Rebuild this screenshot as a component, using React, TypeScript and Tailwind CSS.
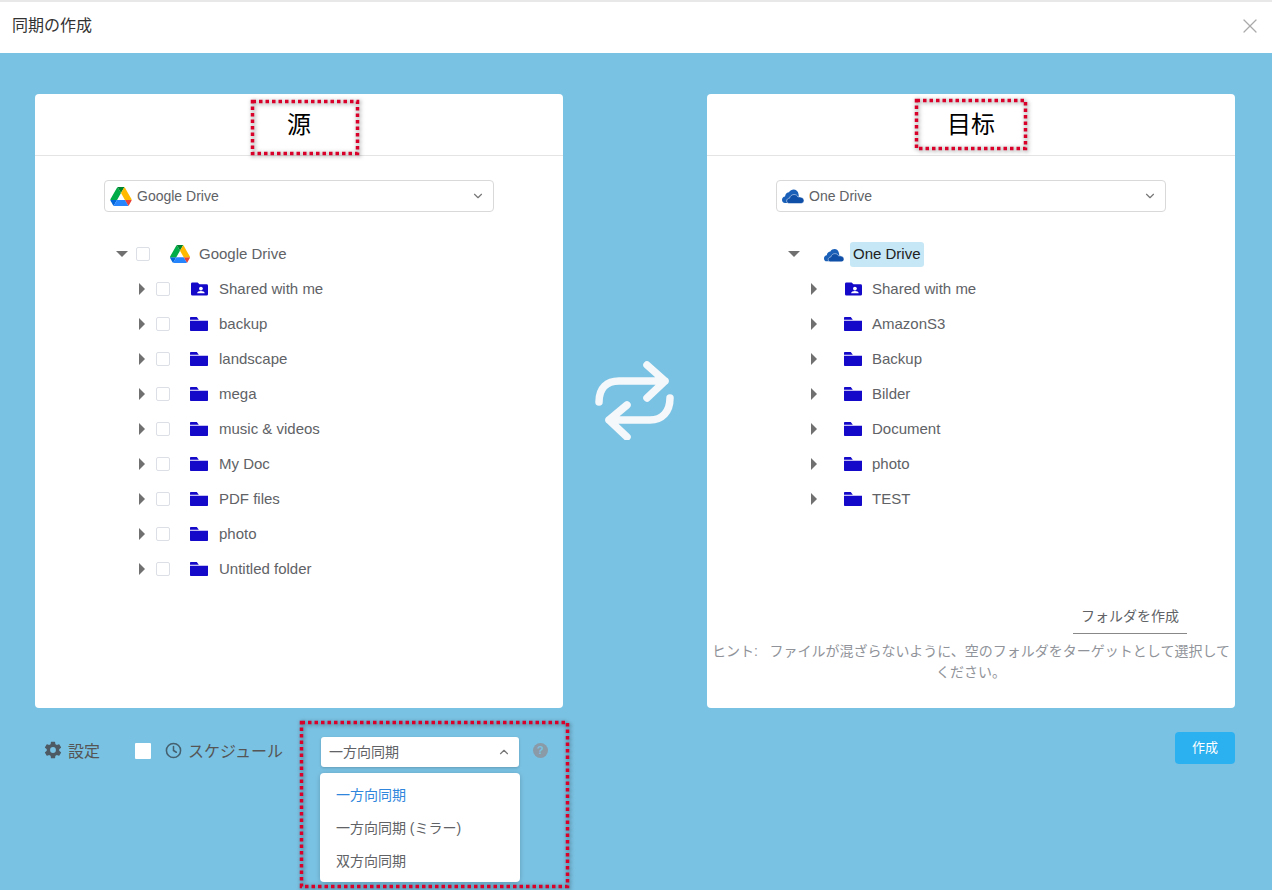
import React from 'react';
import { ChevronDown, ChevronUp, X } from 'lucide-react';

const FONT = "font-['Liberation_Sans','Noto_Sans_CJK_JP',sans-serif]";

const DriveLogo = ({ className }: { className: string }) => (
  <svg viewBox="0 0 87.3 78" className={className}>
    <path d="m6.6 66.85 3.85 6.65c.8 1.4 1.95 2.5 3.3 3.3l13.75-23.8h-27.5c0 1.55.4 3.1 1.2 4.5z" fill="#0066da" />
    <path d="m43.65 25-13.75-23.8c-1.35.8-2.5 1.9-3.3 3.3l-25.4 44a9.06 9.06 0 0 0 -1.2 4.5h27.5z" fill="#00ac47" />
    <path d="m73.55 76.8c1.35-.8 2.5-1.9 3.3-3.3l1.6-2.75 7.65-13.25c.8-1.4 1.2-2.95 1.2-4.5h-27.502l5.852 11.5z" fill="#ea4335" />
    <path d="m43.65 25 13.75-23.8c-1.35-.8-2.9-1.2-4.5-1.2h-18.5c-1.6 0-3.15.45-4.5 1.2z" fill="#00832d" />
    <path d="m59.8 53h-32.3l-13.75 23.8c1.35.8 2.9 1.2 4.5 1.2h50.8c1.6 0 3.15-.45 4.5-1.2z" fill="#2684fc" />
    <path d="m73.4 26.5-12.7-22c-.8-1.4-1.95-2.5-3.3-3.3l-13.75 23.8 16.15 28h27.45c0-1.55-.4-3.1-1.2-4.5z" fill="#ffba00" />
  </svg>
);

const OneDriveLogo = ({ className }: { className: string }) => (
  <svg viewBox="0 0 22 15" className={className}>
    <path d="M6 14.500H3C1 14.500 0 13 0 11.300 0 9.300 1.500 8 3 7.900 3.500 5 5.300 3.700 7 3.700 8 1.800 10 1 11.500 1 14 1 16 2.700 16.500 5.500L17 9 8 12z" fill="#1a5fb8" />
    <path d="M7 15C5.500 15 4.600 13.700 4.600 12.500 4.600 10.800 6 9.700 7.500 9.700 8 7.400 10 6 12 6 14 6 15.500 7 16 8.500 18 8 22 9 22 12 22 14 20.500 15 19 15z" fill="#0f4fa8" stroke="#fff" strokeWidth="0.5" />
  </svg>
);

const FolderIcon = ({ shared }: { shared?: boolean }) =>
  shared ? (
    <svg viewBox="0 0 18 14" className="mb-[2px] ml-[1px] h-[14px] w-[17px] shrink-0">
      <path d="M1.500 0H7l2 2h7.500A1.500 1.500 0 0 1 18 3.500v9a1.500 1.500 0 0 1-1.500 1.500h-15A1.500 1.500 0 0 1 0 12.500v-11A1.500 1.500 0 0 1 1.500 0z" fill="#1509c9" />
      <circle cx="10.500" cy="6.500" r="2" fill="#fff" />
      <path d="M6.500 11.500C6.500 9.800 8.500 9 10.500 9s4 .8 4 2.500z" fill="#fff" />
    </svg>
  ) : (
    <svg viewBox="0 0 18 14" className="mb-[2px] h-[14px] w-[18px] shrink-0">
      <path d="M.8 0h6l2 2.800H0V.8A.8.8 0 0 1 .8 0z" fill="#1509c9" />
      <path d="M0 3.800h18V13.200a.8.8 0 0 1-.8.8H.8a.8.8 0 0 1-.8-.8z" fill="#1509c9" />
    </svg>
  );

const Caret = ({ open }: { open?: boolean }) =>
  open ? (
    <span className="h-0 w-0 border-x-[6px] border-t-[6px] border-x-transparent border-t-[#707070]" />
  ) : (
    <span className="h-0 w-0 border-y-[6px] border-l-[6px] border-y-transparent border-l-[#707070]" />
  );

const Check = () => <span className="h-[14px] w-[14px] shrink-0 rounded-[2px] border border-[#dcdfe6] bg-white" />;

const SelectBox = ({ label, icon }: { label: string; icon: React.ReactNode }) => (
  <div className="mx-auto mt-[24px] flex h-[32px] w-[390px] items-center rounded-[4px] border border-[#d9d9d9] pl-[5px] pr-[8px] text-[14px] text-[#606266]">
    {icon}
    <span className="ml-[5px]">{label}</span>
    <ChevronDown className="ml-auto h-[14px] w-[14px] text-[#777]" />
  </div>
);

const Row = ({ name, check }: { name: string; check: boolean }) => (
  <div className="ml-[101px] flex h-[35px] items-center text-[15px] text-[#606266]">
    <span className="mb-[2px] flex w-[12px] justify-center"><Caret /></span>
    {check ? <span className="mb-[2px] ml-[8px] mr-[20px] flex"><Check /></span> : <span className="w-[24px]" />}
    <FolderIcon shared={name === 'Shared with me'} />
    <span className={check ? 'ml-[11px]' : 'ml-[10px]'}>{name}</span>
  </div>
);

// red dotted annotation boxes painted over the screenshot
const Dotted = ({ className, w, h }: { className: string; w: number; h: number }) => (
  <svg width={w} height={h} className={`absolute overflow-visible drop-shadow-[1px_1px_2px_rgba(0,0,0,0.5)] ${className}`}>
    <rect x="1.500" y="1.500" width={w - 3} height={h - 3} fill="none" stroke="#d9002a" strokeWidth="3.500" strokeDasharray="3.500 3" />
  </svg>
);

const sourceFolders = ['Shared with me', 'backup', 'landscape', 'mega', 'music & videos', 'My Doc', 'PDF files', 'photo', 'Untitled folder'];
const targetFolders = ['Shared with me', 'AmazonS3', 'Backup', 'Bilder', 'Document', 'photo', 'TEST'];

export default function App() {
  return (
    <div className={`relative flex h-[890px] w-[1272px] flex-col overflow-hidden bg-[#7ac2e3] ${FONT}`}>
      <header className="flex h-[53px] items-center justify-between border-t-2 border-[#e8e8e8] bg-white pb-[3px] pl-[12px] pr-[10px]">
        <span className="text-[16px] text-[#333]">同期の作成</span>
        <X className="h-[24px] w-[24px] text-[#aaa]" strokeWidth={1.2} />
      </header>

      <main className="flex items-start justify-between pl-[35px] pr-[37px] pt-[41px]">
        <section className="flex h-[614px] w-[528px] flex-col rounded-[4px] bg-white">
          <h2 className="flex h-[62px] items-center justify-center border-b border-[#e4e4e4] text-[24px] text-black">源</h2>
          <SelectBox label="Google Drive" icon={<DriveLogo className="h-[19px] w-[22px]" />} />
          <div className="mt-[25px]">
            <div className="flex h-[35px] items-center text-[15px] text-[#606266]">
              <span className="mb-[2px] ml-[81px] flex w-[12px] justify-center"><Caret open /></span>
              <span className="mb-[1px] ml-[8px] flex"><Check /></span>
              <DriveLogo className="mb-[1px] ml-[20px] h-[18px] w-[20px]" />
              <span className="ml-[9px]">Google Drive</span>
            </div>
            {sourceFolders.map((f) => (
              <Row key={f} name={f} check />
            ))}
          </div>
        </section>

        <svg viewBox="0 0 80 80" className="mt-[266px] h-[80px] w-[80px]" fill="none" stroke="#f4f8fb" strokeWidth="7.500" strokeLinecap="round" strokeLinejoin="round">
          <path d="M4 42c0-14 8-21 20-21h46M52 5l18 16-18 17" />
          <path d="M75 38c0 14-8 22-20 22H14M32 45 14 60l18 17" />
        </svg>

        <section className="flex h-[614px] w-[528px] flex-col rounded-[4px] bg-white">
          <h2 className="flex h-[62px] items-center justify-center border-b border-[#e4e4e4] text-[24px] text-black">目标</h2>
          <SelectBox label="One Drive" icon={<OneDriveLogo className="h-[16px] w-[22px]" />} />
          <div className="mt-[25px]">
            <div className="flex h-[35px] items-center text-[15px]">
              <span className="mb-[2px] ml-[81px] flex w-[12px] justify-center"><Caret open /></span>
              <OneDriveLogo className="ml-[24px] h-[14px] w-[20px]" />
              <span className="ml-[6px] rounded-[3px] bg-[#c6e8f6] px-[3px] py-[1px] text-[#222]">One Drive</span>
            </div>
            {targetFolders.map((f) => (
              <Row key={f} name={f} check={false} />
            ))}
          </div>
          <div className="mt-auto flex flex-col items-end">
            <span className="mr-[48px] flex h-[34px] w-[114px] items-center justify-center border-b border-[#888] text-[14px] text-[#606266]">フォルダを作成</span>
            <p className="mb-[25px] mt-[7px] w-full px-[4px] text-center text-[14px] leading-[21px] text-[#909399]">ヒント:{'\u00a0\u00a0\u00a0'}ファイルが混ざらないように、空のフォルダをターゲットとして選択してください。</p>
          </div>
        </section>
      </main>

      <footer className="flex items-start pl-[44px] pr-[37px] pt-[24px]">
        <div className="mt-[5px] flex h-[30px] items-center text-[16px] text-[#555]">
          <svg viewBox="0 0 24 24" className="-ml-[1px] mb-[4px] h-[20px] w-[20px]" fill="#4d5a63">
            <path d="M19.430 12.980c.04-.32.07-.640.07-.980s-.03-.660-.07-.980l2.110-1.650a.5.5 0 0 0 .120-.640l-2-3.460a.5.5 0 0 0-.610-.220l-2.490 1a7.300 7.300 0 0 0-1.690-.980l-.380-2.650A.49.49 0 0 0 14 2h-4a.49.49 0 0 0-.490.420l-.380 2.650c-.610.250-1.170.590-1.690.980l-2.490-1a.49.49 0 0 0-.610.220l-2 3.460a.49.49 0 0 0 .120.640l2.110 1.650c-.04.320-.07.650-.07.980s.03.660.07.980l-2.110 1.650a.5.5 0 0 0-.120.640l2 3.460c.12.220.39.300.610.220l2.490-1c.52.400 1.080.730 1.690.980l.380 2.650c.03.240.24.420.49.420h4c.25 0 .46-.180.490-.420l.380-2.650c.610-.250 1.170-.590 1.690-.980l2.490 1c.23.090.49 0 .610-.220l2-3.460a.5.5 0 0 0-.120-.640zM12 15.500a3.500 3.500 0 1 1 0-7 3.500 3.500 0 0 1 0 7z" />
          </svg>
          <span className="ml-[5px]">設定</span>
          <span className="mb-[2px] ml-[35px] h-[16px] w-[16px] rounded-[1px] bg-white" />
          <svg viewBox="0 0 24 24" className="mb-[4px] ml-[14px] h-[17px] w-[17px]" fill="none" stroke="#45606f" strokeWidth="2.200" strokeLinecap="round">
            <circle cx="12" cy="12" r="10" />
            <path d="M12 6.500V12l4 2.500" />
          </svg>
          <span className="ml-[6px]">スケジュール</span>
        </div>

        <div className="relative ml-[38px] mt-[5px] flex h-[30px] w-[198px] items-center justify-between rounded-[3px] bg-white pl-[8px] pr-[8px] text-[14px] text-[#606266] shadow-[0_1px_3px_rgba(0,0,0,0.2)]">
          一方向同期
          <ChevronUp className="h-[14px] w-[14px] text-[#777]" />
          <ul className="absolute left-[-1px] top-[36px] w-[200px] rounded-[4px] bg-white pb-[4px] pt-[6px] text-[14px] text-[#606266] shadow-[0_1px_5px_rgba(0,0,0,0.2)]">
            <li className="flex h-[33px] items-center pl-[16px] text-[#2f86dc]">一方向同期</li>
            <li className="flex h-[33px] items-center pl-[16px]">一方向同期 (ミラー)</li>
            <li className="flex h-[33px] items-center pl-[16px]">双方向同期</li>
          </ul>
        </div>

        <span className="ml-[14px] mt-[11px] flex h-[15px] w-[15px] items-center justify-center rounded-full bg-[#8a9aa6] text-[11px] font-bold text-[#7ac2e3]">?</span>

        <button className="ml-auto h-[32px] w-[60px] rounded-[4px] bg-[#2bb0f0] text-[13px] text-white">作成</button>
      </footer>

      <Dotted className="left-[251px] top-[100px]" w={108} h={55} />
      <Dotted className="left-[915px] top-[99px]" w={112} h={51} />
      <Dotted className="left-[300px] top-[721px]" w={269} h={167} />
    </div>
  );
}
